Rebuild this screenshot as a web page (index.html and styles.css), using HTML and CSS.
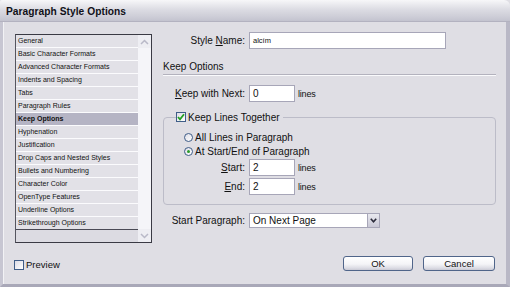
FILE: index.html
```html
<!DOCTYPE html>
<html>
<head>
<meta charset="utf-8">
<link rel="stylesheet" href="styles.css">
</head>
<body>
<div class="window">
  <div class="titlebar"><span class="title">Paragraph Style Options</span></div>
  <div class="frame">
    <div class="grid">
      <div class="list">
        <ul class="items">
          <li>General</li>
          <li>Basic Character Formats</li>
          <li>Advanced Character Formats</li>
          <li>Indents and Spacing</li>
          <li>Tabs</li>
          <li>Paragraph Rules</li>
          <li class="selected">Keep Options</li>
          <li>Hyphenation</li>
          <li>Justification</li>
          <li>Drop Caps and Nested Styles</li>
          <li>Bullets and Numbering</li>
          <li>Character Color</li>
          <li>OpenType Features</li>
          <li>Underline Options</li>
          <li class="last">Strikethrough Options</li>
        </ul>
        <div class="scrollbar">
          <div class="sb-btn"><svg width="9" height="6" viewBox="0 0 9 6"><path d="M1 5 L4.5 1.5 L8 5" fill="none" stroke="#b9b9c8" stroke-width="1.5"/></svg></div>
          <div class="sb-track"></div>
          <div class="sb-btn"><svg width="9" height="6" viewBox="0 0 9 6"><path d="M1 1 L4.5 4.5 L8 1" fill="none" stroke="#b9b9c8" stroke-width="1.5"/></svg></div>
        </div>
      </div>

      <div class="form">
        <div class="row">
          <span class="label">Style <u>N</u>ame:</span>
          <div class="input name">alcím</div>
        </div>

        <div class="section-head">Keep Options</div>

        <div class="row keep-next">
          <span class="label"><u>K</u>eep with Next:</span>
          <div class="input num">0</div>
          <span class="unit">lines</span>
        </div>

        <fieldset class="group">
          <legend class="legend">
            <span class="checkbox checked"><svg width="8" height="8" viewBox="0 0 8 8"><path d="M1 4 L3 6.3 L7 1.3" fill="none" stroke="#22a022" stroke-width="1.8"/></svg></span>
            <span>Keep Lines Together</span>
          </legend>
          <div class="group-body">
            <div class="radio-row first"><span class="radio"></span><span>All Lines in Paragraph</span></div>
            <div class="radio-row"><span class="radio on"></span><span>At Start/End of Paragraph</span></div>
            <div class="row sub start">
              <span class="label sublabel"><u>S</u>tart:</span>
              <div class="input num">2</div>
              <span class="unit">lines</span>
            </div>
            <div class="row sub end">
              <span class="label sublabel"><u>E</u>nd:</span>
              <div class="input num">2</div>
              <span class="unit">lines</span>
            </div>
          </div>
        </fieldset>

        <div class="row startpara">
          <span class="label">Start Paragraph:</span>
          <div class="select">
            <span class="select-text">On Next Page</span>
            <span class="select-btn"><svg width="7" height="5" viewBox="0 0 7 5"><path d="M0.8 0.8 L3.5 3.8 L6.2 0.8" fill="none" stroke="#2b2b3a" stroke-width="1.6"/></svg></span>
          </div>
        </div>
      </div>

      <div class="footer-left">
        <span class="checkbox"></span><span class="preview-text">Preview</span>
      </div>
      <div class="footer-right">
        <div class="button ok">OK</div>
        <div class="button cancel">Cancel</div>
      </div>
    </div>
  </div>
</div>
</body>
</html>
```

FILE: styles.css
```css
* { box-sizing: border-box; }

html, body {
  margin: 0;
  padding: 0;
  background: #dfdee4;
}

body {
  font-family: "Liberation Sans", Arial, sans-serif;
  color: #111;
}

.window {
  width: 510px;
  height: 287px;
  display: flex;
  flex-direction: column;
  background: #dfdee4;
  overflow: hidden;
}

.titlebar {
  height: 22px;
  flex: none;
  display: flex;
  align-items: center;
  padding: 2px 0 0 6px;
  background: linear-gradient(#f7f7f9 0%, #ececf0 18%, #dcdce3 45%, #cdcdd7 80%, #c3c3cf 100%);
  border-top-right-radius: 6px;
  border-top-left-radius: 2px;
  border-bottom: 1px solid #b3b2c0;
}

.title {
  font-size: 10.2px;
  font-weight: bold;
  color: #101018;
  letter-spacing: 0.05px;
}

.frame {
  flex: 1;
  border-left: 3px solid #c7c6d2;
  border-right: 4px solid #b9b8c6;
  border-bottom: 3px solid #a9a8b8;
  box-shadow: inset 1px 0 0 #f2f2f5;
  padding: 10px 0 0 12px;
}

.grid {
  display: grid;
  grid-template-columns: 137px 334px;
  grid-template-rows: 211px 15px;
  column-gap: 11px;
  row-gap: 13px;
}

/* List */
.list {
  margin-top: 2px;
  height: 209px;
  border: 1px solid #3a3a44;
  border-left-color: #55555f;
  display: flex;
  background: #dcdbe2;
}

.items {
  list-style: none;
  margin: 0;
  padding: 0;
  flex: 1;
  font-size: 7px;
}

.items li {
  height: 13px;
  line-height: 12px;
  padding-left: 2px;
  background: #e2e1e7;
  border-bottom: 1px solid #fbfbfd;
  white-space: nowrap;
  color: #111;
}

.items li.selected {
  background: #b5b4c4;
  font-weight: bold;
}

.items li.last {
  border-bottom: 1px solid #4a4a55;
}

.scrollbar {
  width: 13px;
  flex: none;
  display: flex;
  flex-direction: column;
  background: #f4f4f8;
}

.sb-btn {
  height: 13px;
  display: flex;
  align-items: center;
  justify-content: center;
  background: #eeeef3;
}

.sb-track {
  flex: 1;
  background: #f5f5f9;
}

/* Form */
.form {
  font-size: 10px;
  display: flex;
  flex-direction: column;
}

.row {
  display: flex;
  align-items: center;
  height: 17px;
}

.label {
  width: 82px;
  text-align: right;
  margin-right: 4px;
  white-space: nowrap;
}

.label u { text-decoration: underline; text-underline-offset: 1px; }

.input {
  height: 17px;
  background: #fff;
  border: 1px solid #a7a6b8;
  padding-left: 3px;
  display: flex;
  align-items: center;
  font-size: 10px;
}

.input.name {
  width: 197px;
  font-size: 7.5px;
}

.input.num {
  width: 46px;
}

.unit {
  margin-left: 3px;
  font-size: 9px;
  letter-spacing: -0.2px;
}

.section-head {
  margin-top: 12px;
  width: 333px;
  height: 14px;
  line-height: 12px;
  border-bottom: 1px solid #b3b2bd;
  box-shadow: 0 1px 0 #fafafc;
  padding-bottom: 1px;
}

.keep-next { margin-top: 10px; }

.group {
  margin: 9px 0 0 0;
  width: 333px;
  border: 1px solid #bcbcc8;
  border-radius: 4px;
  padding: 0 0 9px 12px;
  min-width: 0;
}

.legend {
  padding: 0 3px 0 0;
  height: 12px;
  display: flex;
  align-items: center;
  font-size: 10px;
}

.checkbox {
  width: 10px;
  height: 10px;
  border: 1px solid #3f5d88;
  background: linear-gradient(135deg, #dcdce6, #ffffff);
  display: inline-flex;
  align-items: center;
  justify-content: center;
  margin-right: 2px;
  flex: none;
}

.group-body {
  margin-left: 8px;
  display: flex;
  flex-direction: column;
}

.radio-row {
  height: 14px;
  display: flex;
  align-items: center;
}

.radio-row.first { margin-top: 7px; }

.radio {
  width: 9px;
  height: 9px;
  border: 1px solid #3f5d88;
  border-radius: 50%;
  background: linear-gradient(135deg, #dcdce6, #ffffff);
  margin-right: 2px;
  display: inline-flex;
  align-items: center;
  justify-content: center;
  flex: none;
}

.radio.on::after {
  content: "";
  width: 3px;
  height: 3px;
  border-radius: 50%;
  background: #2b9a2b;
}

.sublabel {
  width: 61px;
}

.row.start { margin-top: 1px; }
.row.end { margin-top: 2px; }

.startpara {
  margin-top: 8px;
  height: 15px;
}

.select {
  width: 131px;
  height: 15px;
  border: 1px solid #a7a6b8;
  background: #fff;
  display: flex;
  align-items: center;
}

.select-text {
  flex: 1;
  padding-left: 3px;
  font-size: 10px;
}

.select-btn {
  width: 12px;
  height: 13px;
  background: linear-gradient(#e9e9ef, #c9c8d6);
  border-left: 1px solid #a7a6b8;
  display: flex;
  align-items: center;
  justify-content: center;
}

/* Footer */
.footer-left {
  display: flex;
  align-items: center;
  margin-left: -1px;
  padding-top: 2px;
}

.preview-text {
  font-size: 9.5px;
}

.footer-right {
  display: flex;
  justify-content: flex-end;
  gap: 10px;
  padding-right: 2px;
}

.button {
  height: 15px;
  border: 1px solid #50658a;
  border-radius: 3px;
  background: linear-gradient(#ffffff 0%, #f4f4f7 55%, #dcdce4 85%, #c9c9d4 100%);
  display: flex;
  align-items: center;
  justify-content: center;
  font-size: 9.5px;
}

.button.ok { width: 70px; }
.button.cancel { width: 72px; }
```
